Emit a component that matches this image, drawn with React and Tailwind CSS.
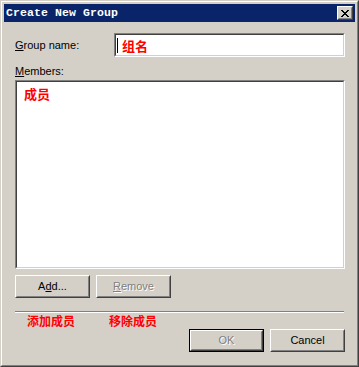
const ui = { fontFamily: '"Liberation Sans", Arial, sans-serif' }
const cjk = { fontFamily: '"Noto Sans CJK SC", "Liberation Sans", sans-serif' }

const Raised = ({ className = '', children }) => (
    <div className={`border border-t-white border-l-white border-r-[#404040] border-b-[#404040] ${className}`}>
        <div className="w-full h-full border border-t-[#d4d0c8] border-l-[#d4d0c8] border-r-[#808080] border-b-[#808080] flex items-center justify-center">
            {children}
        </div>
    </div>
)

const Sunken = ({ className = '', children }) => (
    <div className={`border border-t-[#808080] border-l-[#808080] border-r-white border-b-white ${className}`}>
        <div className="w-full h-full border border-t-[#404040] border-l-[#404040] border-r-[#d4d0c8] border-b-[#d4d0c8] bg-white">
            {children}
        </div>
    </div>
)

const disabled = 'text-[#808080] [text-shadow:1px_1px_0_#ffffff]'

const Button = ({ children, isDefault, className = '' }) => {
    const btn = (
        <Raised className={isDefault ? 'w-[73px] h-[21px]' : `w-[75px] h-[23px] ${className}`}>
            <span className={`text-[11px] leading-none ${isDefault ? disabled : ''}`}>{children}</span>
        </Raised>
    )
    if (!isDefault) return btn
    return <div className="border border-black w-[75px] h-[23px]">{btn}</div>
}

export default function App() {
    return (
        <div className="w-[359px] h-[367px] text-black" style={ui}>
            <div className="w-full h-full border border-t-[#d4d0c8] border-l-[#d4d0c8] border-r-[#404040] border-b-[#404040]">
                <div className="w-full h-full border border-t-white border-l-white border-r-[#808080] border-b-[#808080] bg-[#d4d0c8] p-[2px] flex flex-col">
                    {/* title bar */}
                    <div className="h-[18px] bg-[#0a246a] flex items-center justify-between pl-[2px] pr-[2px]">
                        <span className="text-white font-bold text-[11.5px] leading-none tracking-[0.1px]" style={{ fontFamily: '"Liberation Mono", monospace' }}>
                            Create New Group
                        </span>
                        <Raised className="w-[16px] h-[14px] bg-[#d4d0c8]">
                            <svg width="8" height="7" viewBox="0 0 8 7" shapeRendering="crispEdges">
                                <path d="M0 0h2v1H0zM6 0h2v1H6zM1 1h2v1H1zM5 1h2v1H5zM2 2h4v1H2zM3 3h2v1H3zM2 4h4v1H2zM1 5h2v1H1zM5 5h2v1H5zM0 6h2v1H0zM6 6h2v1H6z" fill="#000" />
                            </svg>
                        </Raised>
                    </div>

                    {/* body */}
                    <div className="flex flex-col pl-[11px] pr-[10px] text-[11px]">
                        <div className="flex items-center mt-[11px]">
                            <div className="w-[99px]">
                                <span className="underline underline-offset-1">G</span>roup name:
                            </div>
                            <Sunken className="flex-1 h-[24px]">
                                <div className="flex items-center h-full pl-[1px]">
                                    <div className="w-[1px] h-[15px] bg-black" />
                                    <span className="ml-[4px] text-[13px] font-bold text-[#ff0000] leading-none" style={cjk}>组名</span>
                                </div>
                            </Sunken>
                        </div>

                        <div className="mt-[8px] h-[13px] leading-[13px]">
                            <span className="underline underline-offset-1">M</span>embers:
                        </div>
                        <Sunken className="mt-[2px] h-[189px]">
                            <div className="pl-[7px] pt-[5px] text-[13px] font-bold text-[#ff0000] leading-none" style={cjk}>成员</div>
                        </Sunken>

                        <div className="flex gap-[6px] mt-[6px]">
                            <Button>
                                A<span className="underline underline-offset-1">d</span>d...
                            </Button>
                            <Raised className="w-[75px] h-[23px]">
                                <span className={`text-[11px] leading-none ${disabled}`}>
                                    <span className="underline underline-offset-1">R</span>emove
                                </span>
                            </Raised>
                        </div>

                        <div className="mt-[13px] mr-[1px] border-t border-t-[#808080] border-b border-b-white" />

                        <div className="flex pl-[12px] gap-[34px] h-[15px] items-center text-[12px] font-bold text-[#ff0000] leading-none" style={cjk}>
                            <span>添加成员</span>
                            <span>移除成员</span>
                        </div>

                        <div className="flex justify-end gap-[6px] mt-[1px]">
                            <Button isDefault>OK</Button>
                            <Button>Cancel</Button>
                        </div>
                    </div>
                </div>
            </div>
        </div>
    )
}
